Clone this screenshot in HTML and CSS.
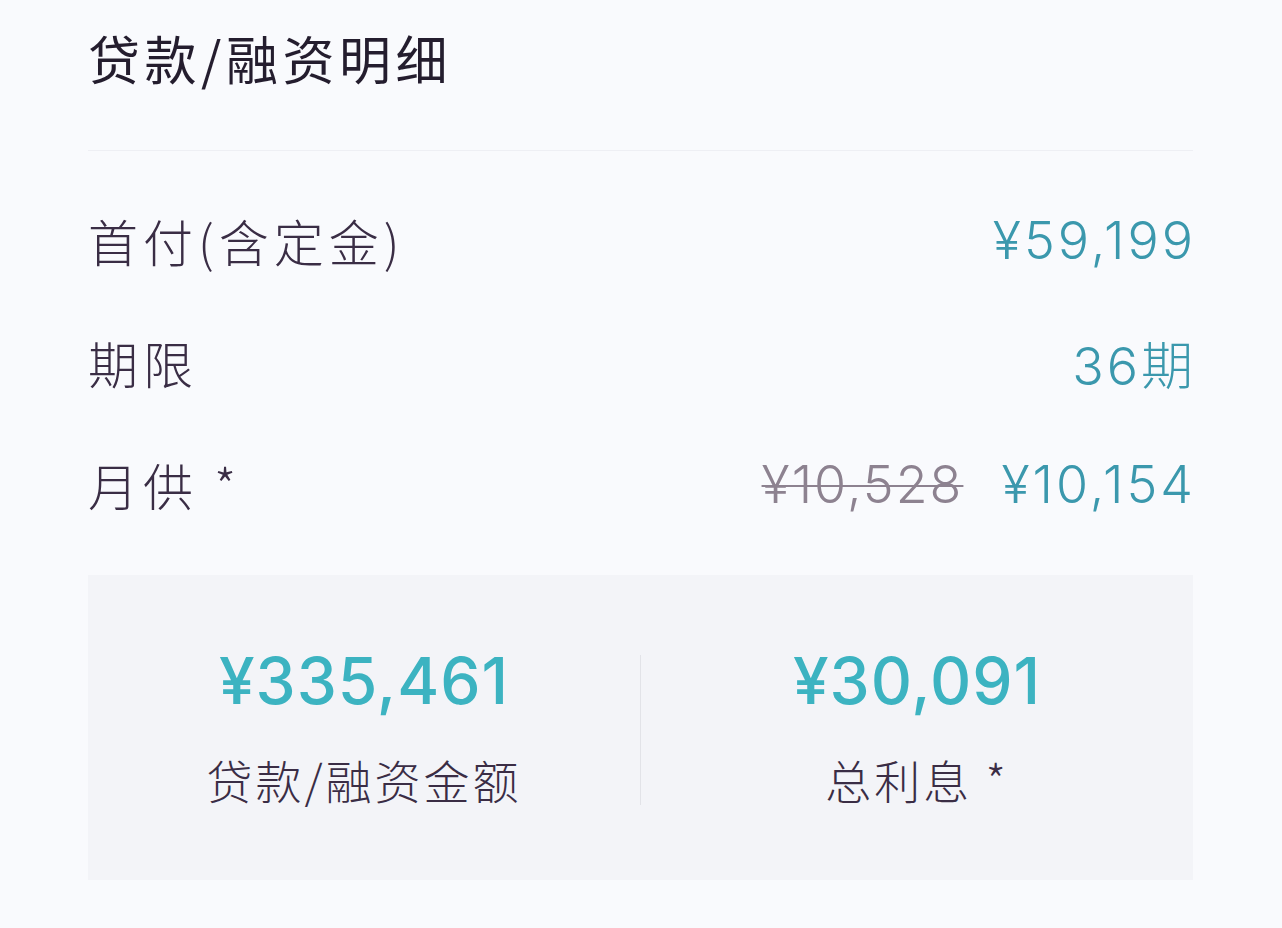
FILE: index.html
```html
<!DOCTYPE html>
<html lang="zh-CN">
<head>
<meta charset="utf-8">
<title>贷款/融资明细</title>
<link rel="stylesheet" href="styles.css">
</head>
<body>
<div class="page">
  <h1 class="title">贷款/融资明细</h1>
  <div class="divider"></div>
  <div class="rows">
    <div class="row">
      <span class="label">首付(含定金)</span>
      <span class="value">¥59,199</span>
    </div>
    <div class="row">
      <span class="label">期限</span>
      <span class="value">36期</span>
    </div>
    <div class="row">
      <span class="label">月供 *</span>
      <span class="value"><s class="old">¥10,528</s><span class="new">¥10,154</span></span>
    </div>
  </div>
  <div class="summary">
    <div class="cell">
      <div class="big">¥335,461</div>
      <div class="caption">贷款/融资金额</div>
    </div>
    <div class="vline"></div>
    <div class="cell">
      <div class="big">¥30,091</div>
      <div class="caption">总利息 *</div>
    </div>
  </div>
</div>
</body>
</html>
```

FILE: styles.css
```css
html, body {
  margin: 0;
  padding: 0;
  background: #f9fafd;
}
body {
  font-family: "Noto Sans CJK SC", "Noto Sans", sans-serif;
  color: #33283f;
}
.page {
  width: 1105px;
  padding: 22px 0 0 88px;
}
.title {
  margin: 0;
  font-size: 52px;
  line-height: 72px;
  font-weight: 400;
  color: #241d2e;
  letter-spacing: 4.5px;
}
.divider {
  margin-top: 56px;
  height: 1px;
  background: #eeeff4;
}
.rows {
  margin-top: 28px;
}
.row {
  height: 122px;
  display: flex;
  align-items: center;
  justify-content: space-between;
}
.label {
  font-size: 50px;
  font-weight: 300;
  letter-spacing: 5px;
  color: #3a2d45;
}
.value {
  font-family: "Inter", "Noto Sans CJK SC", sans-serif;
  font-size: 52px;
  font-weight: 300;
  letter-spacing: 3px;
  color: #3b98ad;
  display: flex;
  align-items: center;
  gap: 38px;
  margin-right: -3px;
}
.old {
  color: #8d8290;
  letter-spacing: 2px;
  text-decoration-thickness: 2px;
}
.summary {
  margin-top: 30px;
  height: 305px;
  background: #f3f4f8;
  display: flex;
  align-items: stretch;
}
.cell {
  flex: 1;
  display: flex;
  flex-direction: column;
  align-items: center;
  padding-top: 70px;
}
.vline {
  width: 1px;
  margin: 80px 0 75px;
  background: #e2e3e8;
}
.big {
  font-family: "Inter", "Noto Sans", sans-serif;
  font-size: 64px;
  line-height: 72px;
  font-weight: 500;
  letter-spacing: 1px;
  color: #3cb3c1;
}
.caption {
  margin-top: 30px;
  font-size: 46px;
  line-height: 64px;
  font-weight: 300;
  letter-spacing: 3px;
  color: #3a2d45;
}
```
